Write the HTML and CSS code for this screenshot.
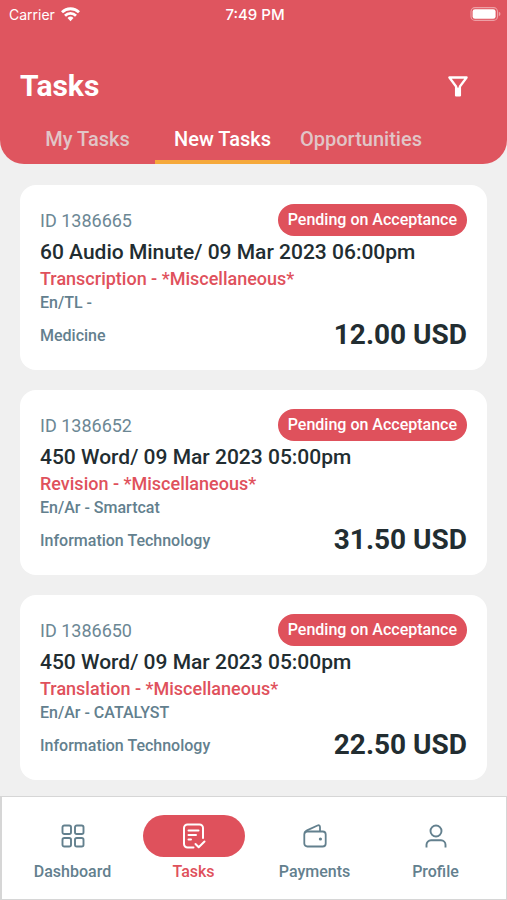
FILE: index.html
```html
<!DOCTYPE html>
<html lang="en">
<head>
<meta charset="utf-8">
<meta name="viewport" content="width=device-width, initial-scale=1">
<title>Tasks</title>
<link rel="stylesheet" href="styles.css">
</head>
<body>
<div class="app">
  <header class="header">
    <div class="status">
      <div class="status-carrier">Carrier
        <svg width="19" height="15" viewBox="0 0 19 15" fill="none" stroke="currentColor" stroke-width="2.8"><path d="M1 5.200a12.200 12.200 0 0 1 17 0M4 8.700a7.900 7.900 0 0 1 11 0"/><path d="M9.500 14.200l-3-3.200a4.300 4.300 0 0 1 6 0z" fill="currentColor" stroke="none"/></svg>
      </div>
      <div class="status-time">7:49 PM</div>
      <div class="status-battery">
        <svg width="31" height="14" viewBox="0 0 31 14"><rect x="1" y=".6" width="26.500" height="12.800" rx="4" fill="none" stroke="#eda0a6" stroke-width="1.100"/><rect x="2.600" y="2.200" width="23" height="9.600" rx="2.400" fill="#fff"/><path d="M28.800 4.800q1.700.6 1.700 2.200t-1.700 2.200z" fill="#eda0a6"/></svg>
      </div>
    </div>
    <div class="title-row">
      <h1 class="title">Tasks</h1>
      <button class="filter" type="button" aria-label="Filter">
        <svg width="20" height="21" viewBox="0 0 20 21" fill="none" stroke="currentColor" stroke-width="2.300" stroke-linejoin="round"><path d="M1.400 1.500h17.200L11.900 10.500v8.900H8.100v-8.900z"/><path d="M10 11.500v7.500" stroke-width="2.600"/></svg>
      </button>
    </div>
    <nav class="tabs" aria-label="Task lists">
      <a class="tab" href="#my">My Tasks</a>
      <a class="tab tab-active" href="#new" aria-current="page">New Tasks</a>
      <a class="tab" href="#opportunities">Opportunities</a>
    </nav>
  </header>

  <main class="list">
    <article class="card">
      <div class="card-row card-top"><span class="task-id">ID 1386665</span><span class="badge">Pending on Acceptance</span></div>
      <h2 class="task-title">60 Audio Minute/ 09 Mar 2023 06:00pm</h2>
      <p class="task-type">Transcription - *Miscellaneous*</p>
      <p class="task-lang">En/TL -</p>
      <div class="card-row card-bottom"><span class="task-field">Medicine</span><strong class="price">12.00 USD</strong></div>
    </article>
    <article class="card">
      <div class="card-row card-top"><span class="task-id">ID 1386652</span><span class="badge">Pending on Acceptance</span></div>
      <h2 class="task-title">450 Word/ 09 Mar 2023 05:00pm</h2>
      <p class="task-type">Revision - *Miscellaneous*</p>
      <p class="task-lang">En/Ar - Smartcat</p>
      <div class="card-row card-bottom"><span class="task-field">Information Technology</span><strong class="price">31.50 USD</strong></div>
    </article>
    <article class="card">
      <div class="card-row card-top"><span class="task-id">ID 1386650</span><span class="badge">Pending on Acceptance</span></div>
      <h2 class="task-title">450 Word/ 09 Mar 2023 05:00pm</h2>
      <p class="task-type">Translation - *Miscellaneous*</p>
      <p class="task-lang">En/Ar - CATALYST</p>
      <div class="card-row card-bottom"><span class="task-field">Information Technology</span><strong class="price">22.50 USD</strong></div>
    </article>
  </main>

  <nav class="bottom-nav" aria-label="Main">
    <a class="nav-item" href="#dashboard">
      <span class="nav-icon"><svg width="24" height="24" viewBox="0 0 24 24" fill="none" stroke="currentColor" stroke-width="1.900"><rect x="1.500" y="1.500" width="8.500" height="8.500" rx="1.800"/><rect x="14" y="1.500" width="8.500" height="8.500" rx="1.800"/><rect x="1.500" y="14" width="8.500" height="8.500" rx="1.800"/><rect x="14" y="14" width="8.500" height="8.500" rx="1.800"/></svg></span>
      Dashboard
    </a>
    <a class="nav-item nav-active" href="#tasks" aria-current="page">
      <span class="nav-icon"><svg width="24" height="26" viewBox="0 0 24 26" fill="none" stroke="currentColor" stroke-width="2" stroke-linecap="round" stroke-linejoin="round"><path d="M11.500 24.500H5.500A3.500 3.500 0 0 1 2 21V5a3.500 3.500 0 0 1 3.500-3.500h12A3.500 3.500 0 0 1 21 5v10M6.500 7.500h10M6.500 12h7.500M6.500 16.500H9M13.500 21l3.200 3.200 5.800-5.700"/></svg></span>
      Tasks
    </a>
    <a class="nav-item" href="#payments">
      <span class="nav-icon"><svg width="24" height="24" viewBox="0 0 24 24" fill="none" stroke="currentColor" stroke-width="1.800" stroke-linejoin="round"><rect x="1.300" y="7.500" width="21.400" height="15" rx="3"/><path d="M1.700 9.200Q2 7.300 4 6.400L14.500 1.500q2.500-.9 2.500 1.700v4.300"/><circle cx="17.400" cy="15" r="1.600" fill="currentColor" stroke="none"/></svg></span>
      Payments
    </a>
    <a class="nav-item" href="#profile">
      <span class="nav-icon"><svg width="24" height="24" viewBox="0 0 24 24" fill="none" stroke="currentColor" stroke-width="1.900"><circle cx="12" cy="7" r="5.500"/><path d="M2.500 23.500v-2.700a4.500 4.500 0 0 1 4.500-4.500h10a4.500 4.500 0 0 1 4.500 4.500v2.700"/></svg></span>
      Profile
    </a>
  </nav>
</div>
</body>
</html>
```
FILE: styles.css
```css
* {
  box-sizing: border-box;
}

body {
  margin: 0;
  background: #f0f0f0;
  color: #222d31;
  font-family: Roboto, "Liberation Sans", sans-serif;
  font-weight: 500;
}

h1, h2, p {
  margin: 0;
}

a {
  color: inherit;
  text-decoration: none;
}

svg {
  display: block;
}

.app {
  display: flex;
  flex-direction: column;
  min-height: 100vh;
}

.header {
  background: #df555f;
  color: #fff;
  border-radius: 0 0 24px 24px;
}

.status {
  display: grid;
  grid-template-columns: 1fr auto 1fr;
  align-items: center;
  height: 28px;
  padding: 0 6px 0 9px;
  font-family: Inter, sans-serif;
  font-size: 14px;
}

.status-carrier {
  display: flex;
  align-items: center;
  gap: 6px;
  font-weight: 400;
}

.status-time {
  font-size: 15px;
}

.status-battery {
  justify-self: end;
}

.title-row {
  display: flex;
  align-items: center;
  justify-content: space-between;
  padding: 38px 39px 0 20px;
}

.title {
  font-size: 30px;
  line-height: 40px;
  font-weight: 700;
}

.filter {
  padding: 0;
  border: 0;
  background: none;
  color: inherit;
}

.tabs {
  display: flex;
  padding: 8px 20px 0;
}

.tab {
  min-width: 135px;
  height: 50px;
  padding: 0 10px;
  border-bottom: 4px solid transparent;
  color: #e1c5c7;
  font-size: 20px;
  line-height: 50px;
  text-align: center;
}

.tab-active {
  border-color: #f5a93b;
  color: #fff;
}

.list {
  display: flex;
  flex: 1;
  flex-direction: column;
  gap: 20px;
  padding: 21px 20px 16px;
}

.card {
  padding: 19px 20px 18px;
  border-radius: 16px;
  background: #fff;
}

.card-row {
  display: flex;
  align-items: center;
  justify-content: space-between;
}

.task-id {
  color: #6c8794;
  font-size: 18px;
  font-weight: 400;
}

.badge {
  padding: 0 10px;
  border-radius: 16px;
  background: #df515c;
  color: #fff;
  font-size: 16px;
  line-height: 32px;
}

.task-title {
  font-size: 21px;
  line-height: 32px;
  font-weight: 500;
}

.task-type {
  color: #df515c;
  font-size: 18px;
  line-height: 22px;
}

.task-lang {
  color: #63808e;
  font-size: 16px;
  line-height: 26px;
}

.task-field {
  color: #63808e;
  font-size: 16px;
}

.card-bottom {
  padding-top: 2px;
}

.price {
  font-size: 28px;
  line-height: 34px;
  font-weight: 700;
}

.bottom-nav {
  display: grid;
  grid-template-columns: repeat(4, 1fr);
  padding: 18px 10px 17px;
  border: 1px solid #d6d6d6;
  border-left-width: 2px;
  background: #fff;
}

.nav-item {
  display: flex;
  flex-direction: column;
  align-items: center;
  gap: 5px;
  color: #63808e;
  font-size: 16px;
  line-height: 20px;
}

.nav-icon {
  display: flex;
  align-items: center;
  justify-content: center;
  width: 102px;
  height: 42px;
  border-radius: 21px;
}

.nav-active {
  color: #df515c;
}

.nav-active .nav-icon {
  background: #df515c;
  color: #fff;
}
```
